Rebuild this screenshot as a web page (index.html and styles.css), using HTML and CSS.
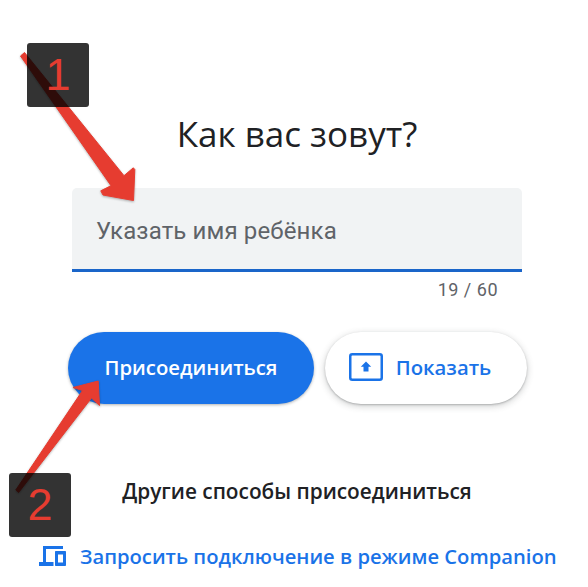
FILE: index.html
```
<!DOCTYPE html>
<html lang="ru">
<head>
<meta charset="utf-8">
<title>Как вас зовут?</title>
<link rel="stylesheet" href="styles.css">
</head>
<body>
<main class="page">
  <h1 class="title">Как вас зовут?</h1>
  <div class="field"><span class="field-text">Указать имя ребёнка</span></div>
  <div class="counter">19 / 60</div>
  <div class="actions">
    <button class="btn btn-join">Присоединиться</button>
    <button class="btn btn-present">
      <svg class="present-icon" viewBox="0 0 34 28" aria-hidden="true"><rect x="1.25" y="1.25" width="31.5" height="25.5" rx="2" fill="none" stroke="#1a73e8" stroke-width="2.5"/><path d="M17 8.500l5.200 5.200H19.500v4.800h-5v-4.800h-2.700z" fill="#1a73e8"/></svg>
      <span>Показать</span>
    </button>
  </div>
  <p class="other">Другие способы присоединиться</p>
  <a class="companion" href="#">
    <svg class="devices-icon" viewBox="0 0 27 20" aria-hidden="true"><path d="M4 0h20v3H7v13h7.500v4H0v-4h4zM17 5h9c.6 0 1 .4 1 1v13c0 .6-.4 1-1 1h-9c-.6 0-1-.4-1-1V6c0-.6.4-1 1-1zm2 3.500V16.500h5V8.500z" fill="#1a73e8" fill-rule="evenodd"/></svg>
    <span>Запросить подключение в режиме Companion</span>
  </a>
</main>
<svg class="arrows" viewBox="0 0 588 587" aria-hidden="true">
  <g class="arrow-shadow"><path d="M20.500 56 24.500 52.500 124 175.700 133.300 167.800 134.800 169.500 133.500 200.500 103 195 100.800 190.800 111 185.700z" fill="#e63c30" stroke="#e63c30" stroke-width="1" stroke-linejoin="round"/>
  <path d="M15.800 490 18.600 492.500 91.500 398 99.500 405.500 98.200 381 73 387.500 82.500 390.500z" fill="#e63c30" stroke="#e63c30" stroke-width="1" stroke-linejoin="round"/></g>
</svg>
<div class="badge badge-one">1</div>
<div class="badge badge-two">2</div>
</body>
</html>
```
FILE: styles.css
```
* { box-sizing: border-box; }
html, body { margin: 0; background: #fff; }
body { width: 588px; height: 587px; overflow: hidden; position: relative; font-family: Roboto, "Open Sans", sans-serif; }
.page { padding-top: 110px; display: flex; flex-direction: column; }
.title { margin: 0 0 1px; height: 48px; line-height: 48px; text-align: center; font-family: "Open Sans", sans-serif; font-size: 35px; font-weight: 400; color: #202124; padding-left: 6px; }
.field { margin: 29px 0 0 72px; width: 450px; height: 84px; background: #f1f3f4; border-bottom: 3px solid #1a65c9; border-radius: 5px 5px 0 0; display: flex; align-items: center; padding: 4px 0 0 25px; }
.field-text { font-size: 24px; color: #5f6368; letter-spacing: .13px; margin-left: -1px; }
.counter { margin: 7px 0 0 0; padding-right: 90px; height: 22px; line-height: 22px; text-align: right; font-size: 18px; color: #5f6368; letter-spacing: .5px; }
.actions { margin: 31px 0 0 68px; display: flex; gap: 11px; }
.btn { height: 72px; border: 0; border-radius: 36px; font-family: "Open Sans", sans-serif; font-size: 20.300px; font-weight: 600; padding: 0 0 2px; display: flex; align-items: center; justify-content: center; }
.btn-join { width: 246px; background: #1a73e8; color: #fff; box-shadow: 0 1px 3px rgba(60,64,67,.4); }
.btn-present { width: 202px; background: #fff; color: #1a73e8; gap: 13px; padding-right: 12px; box-shadow: 0 1px 2px rgba(60,64,67,.3), 0 2px 6px 1px rgba(60,64,67,.2); }
.present-icon { width: 34px; height: 28px; }
.other { margin: 74px 0 0; height: 26px; line-height: 26px; text-align: center; font-family: "Open Sans", sans-serif; font-size: 20.800px; font-weight: 600; color: #202124; padding-left: 6px; }
.companion { margin-top: 38px; padding-left: 39px; display: flex; align-items: center; gap: 14px; height: 28px; text-decoration: none; color: #1a73e8; font-family: "Open Sans", sans-serif; font-size: 20.200px; font-weight: 600; }
.devices-icon { width: 27px; height: 20px; flex: none; }
.arrows { position: absolute; left: 0; top: 0; width: 588px; height: 587px; }
.arrow-shadow { filter: drop-shadow(0 1px 1px rgba(0,0,0,.3)); }
.badge { position: absolute; width: 62px; height: 64px; border-radius: 3px; background: rgba(0,0,0,.8); color: #e63c30; font-family: "Liberation Sans", Arial, sans-serif; font-size: 45px; line-height: 64px; text-align: center; }
.badge-one { left: 27px; top: 43px; }
.badge-two { left: 9px; top: 473px; }
```
